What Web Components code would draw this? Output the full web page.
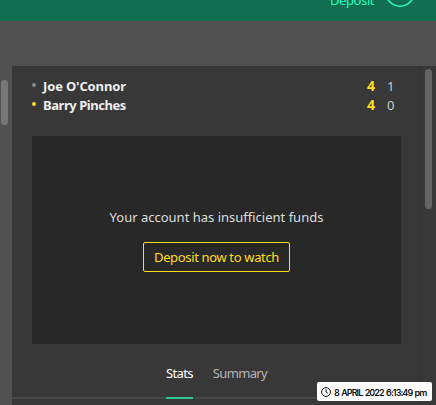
<!DOCTYPE html>
<html lang="en">
<head>
<meta charset="utf-8">
<title>Match</title>
<style>
  body {
    margin: 0;
    width: 436px;
    height: 405px;
    overflow: hidden;
    background: #515151;
    font-family: "Noto Sans", "Open Sans", sans-serif;
    font-size: 13px;
  }
</style>
</head>
<body>
<match-app></match-app>
<script>
const define = (name, html, setup) => {
  const template = document.createElement('template');
  template.innerHTML = html;
  customElements.define(name, class extends HTMLElement {
    constructor() {
      super();
      this.attachShadow({ mode: 'open' });
      this.shadowRoot.appendChild(template.content.cloneNode(true));
    }

    connectedCallback() {
      if (setup) setup(this, this.shadowRoot);
    }
  });
};

define('account-bar', `
  <style>
    :host {
      display: flex;
      align-items: flex-end;
      box-sizing: border-box;
      height: 21px;
      padding-left: 330px;
      background: #126e51;
      color: #26ffbe;
      overflow: hidden;
    }

    .deposit {
      width: 44px;
      margin-bottom: 12px;
      line-height: 18px;
      white-space: nowrap;
      letter-spacing: -0.4px;
    }

    svg {
      flex: none;
      margin: 0 0 14px 11px;
    }
  </style>
  <span class="deposit"><slot></slot></span>
  <svg width="30" height="30" viewBox="0 0 30 30" aria-hidden="true">
    <circle cx="15" cy="15" r="14.2" fill="none" stroke="#26ffbe" stroke-width="1.6"/>
  </svg>
`);

define('scroll-rail', `
  <style>
    :host {
      display: block;
      box-sizing: border-box;
      flex: none;
    }

    .thumb {
      width: 7px;
      height: var(--thumb-height);
      border-radius: 4px;
      background: var(--thumb-color);
    }
  </style>
  <div class="thumb"></div>
`);

define('player-row', `
  <style>
    :host {
      display: flex;
      align-items: center;
      height: 19px;
      color: #eee;
    }

    .dot {
      width: 4px;
      height: 4px;
      margin: 0 7px 2px 0;
      border-radius: 50%;
      background: #8d8d8d;
    }

    :host([serving]) .dot {
      background: #ffdf1b;
    }

    .name {
      flex: 1;
      font-weight: 700;
      letter-spacing: var(--name-tracking, -0.45px);
    }

    .frames {
      width: 20px;
      color: #ffdf1b;
      font-size: 14px;
      font-weight: 700;
    }

    .points {
      width: 13px;
      color: #ccc;
    }
  </style>
  <span class="dot"></span>
  <span class="name"><slot></slot></span>
  <span class="frames"></span>
  <span class="points"></span>
`, (el, root) => {
  root.querySelector('.frames').textContent = el.getAttribute('frames');
  root.querySelector('.points').textContent = el.getAttribute('points');
});

define('stream-notice', `
  <style>
    :host {
      display: flex;
      flex-direction: column;
      align-items: center;
      box-sizing: border-box;
      height: 208px;
      padding-top: 71px;
      background: #282828;
      color: #ddd;
    }

    .message {
      line-height: 20px;
      white-space: nowrap;
    }

    button {
      box-sizing: border-box;
      width: 147px;
      height: 30px;
      margin-top: 15px;
      padding: 0;
      border: 1px solid #ffdf1b;
      border-radius: 2px;
      background: none;
      color: #ffdf1b;
      font: inherit;
      letter-spacing: -0.35px;
      white-space: nowrap;
    }
  </style>
  <span class="message"><slot></slot></span>
  <button><slot name="action"></slot></button>
`);

define('tab-item', `
  <style>
    :host {
      display: block;
      box-sizing: border-box;
      height: 35px;
      color: #b5b5b5;
      letter-spacing: -0.65px;
      line-height: 18px;
      white-space: nowrap;
    }

    :host([active]) {
      border-bottom: 2px solid #2cc998;
      color: #fff;
    }
  </style>
  <slot></slot>
`);

define('tab-strip', `
  <style>
    :host {
      display: flex;
      justify-content: center;
      gap: 20px;
      box-sizing: border-box;
      height: 55px;
      padding: 20px 0 0 1px;
      background: linear-gradient(#474747, #474747) 0 100% / 100% 2px no-repeat;
    }
  </style>
  <slot></slot>
`);

define('time-stamp', `
  <style>
    :host {
      display: flex;
      align-items: center;
      box-sizing: border-box;
      width: 115px;
      height: 19px;
      padding-left: 4px;
      border-radius: 2px;
      background: #fff;
      color: #111;
      font: 600 9px Inter, sans-serif;
      white-space: nowrap;
    }

    svg {
      flex: none;
      margin-right: 3px;
    }

    .text {
      padding-top: 1px;
      letter-spacing: -0.95px;
      word-spacing: 1.1px;
    }
  </style>
  <svg width="10" height="10" viewBox="0 0 10 10" fill="none" stroke="#111" stroke-width="1" aria-hidden="true">
    <circle cx="5" cy="5" r="4.4"/>
    <path d="M5 2.2V5L6.8 6.2"/>
  </svg>
  <span class="text"><slot></slot></span>
`);

define('match-app', `
  <style>
    :host {
      display: block;
    }

    main {
      display: flex;
      height: 384px;
    }

    .page-rail {
      width: 12px;
      padding: 59px 0 0 1px;
      --thumb-height: 45px;
      --thumb-color: #777;
    }

    .panel {
      display: flex;
      width: 424px;
      margin-top: 45px;
      background: #383838;
    }

    .content {
      width: 409px;
      box-sizing: border-box;
      border-right: 1px solid #323232;
    }

    .scores {
      box-sizing: border-box;
      height: 70px;
      padding: 10px 20px 0;
    }

    .scores player-row:first-child {
      --name-tracking: -0.15px;
    }

    stream-notice {
      margin: 0 19px 0 20px;
    }

    .panel-rail {
      width: 15px;
      padding: 3px 0 0 4px;
      --thumb-height: 140px;
      --thumb-color: #646464;
    }

    time-stamp {
      position: absolute;
      left: 317px;
      top: 382px;
    }
  </style>
  <account-bar>Deposit</account-bar>
  <main>
    <scroll-rail class="page-rail"></scroll-rail>
    <section class="panel">
      <div class="content">
        <div class="scores">
          <player-row frames="4" points="1">Joe O'Connor</player-row>
          <player-row serving frames="4" points="0">Barry Pinches</player-row>
        </div>
        <stream-notice>
          Your account has insufficient funds
          <span slot="action">Deposit now to watch</span>
        </stream-notice>
        <tab-strip>
          <tab-item active>Stats</tab-item>
          <tab-item>Summary</tab-item>
        </tab-strip>
      </div>
      <scroll-rail class="panel-rail"></scroll-rail>
    </section>
  </main>
  <time-stamp>8 APRIL 2022 6:13:49 pm</time-stamp>
`);
</script>
</body>
</html>
